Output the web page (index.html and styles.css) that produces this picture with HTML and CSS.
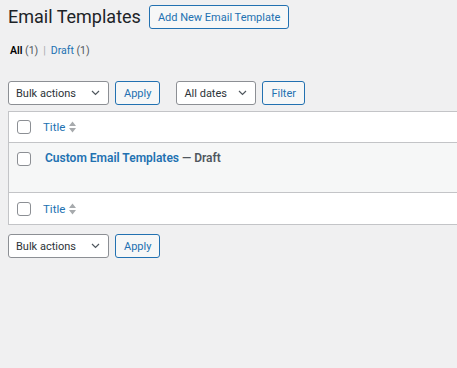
FILE: index.html
```html
<!DOCTYPE html>
<html lang="en">
<head>
  <meta charset="UTF-8" />
  <title>Email Templates</title>
  <link rel="stylesheet" href="styles.css">
</head>
<body>
  <div class="wrap">

    <!-- Heading -->
    <div class="page-head">
      <h1 class="page-title">Email Templates</h1>
      <a href="#" class="btn">Add New Email Template</a>
    </div>

    <!-- Status links -->
    <ul class="subsubsub">
      <li><a href="#" class="current">All <span class="count">(1)</span></a></li>
      <li class="sep">|</li>
      <li><a href="#">Draft <span class="count">(1)</span></a></li>
    </ul>

    <!-- Top toolbar -->
    <div class="tablenav top">
      <div class="actions">
        <select class="select bulk">
          <option>Bulk actions</option>
        </select>
        <button class="btn">Apply</button>
      </div>
      <div class="actions">
        <select class="select dates">
          <option>All dates</option>
        </select>
        <button class="btn">Filter</button>
      </div>
    </div>

    <!-- List table -->
    <table class="list-table">
      <thead>
        <tr>
          <td class="check-col"><input type="checkbox" /></td>
          <th class="title-col"><a href="#">Title <span class="sort"></span></a></th>
        </tr>
      </thead>
      <tbody>
        <tr class="alt">
          <td class="check-col"><input type="checkbox" /></td>
          <td class="title-col"><a href="#" class="row-title">Custom Email Templates</a> <span class="post-state">— Draft</span></td>
        </tr>
      </tbody>
      <tfoot>
        <tr>
          <td class="check-col"><input type="checkbox" /></td>
          <th class="title-col"><a href="#">Title <span class="sort"></span></a></th>
        </tr>
      </tfoot>
    </table>

    <!-- Bottom toolbar -->
    <div class="tablenav bottom">
      <div class="actions">
        <select class="select bulk">
          <option>Bulk actions</option>
        </select>
        <button class="btn">Apply</button>
      </div>
    </div>

  </div>
</body>
</html>
```

FILE: styles.css
```css
body, html {
  margin: 0;
  height: 100%;
  background: #f0f0f1;
  font-family: Roboto, "Noto Sans", sans-serif;
  font-size: 11px;
  color: #3c434a;
  overflow: hidden;
}

.wrap {
  padding: 5px 0 0 8px;
}

a {
  color: #2271b1;
  text-decoration: none;
}

.page-head {
  display: flex;
  align-items: center;
  gap: 8px;
}

.page-title {
  margin: 0;
  font-size: 18px;
  font-weight: 400;
  color: #1d2327;
  line-height: 24px;
}

.btn {
  display: inline-flex;
  align-items: center;
  box-sizing: border-box;
  height: 24px;
  padding: 0 8px;
  border: 1px solid #2271b1;
  border-radius: 3px;
  background: #f6f7f7;
  color: #2271b1;
  font-family: inherit;
  font-size: 11px;
  cursor: pointer;
}

.subsubsub {
  list-style: none;
  display: flex;
  gap: 5px;
  margin: 14px 0 0 2px;
  padding: 0;
  font-size: 10.5px;
  line-height: 16px;
  color: #646970;
}

.subsubsub .current {
  color: #000;
  font-weight: 600;
}

.subsubsub .count {
  color: #50575e;
  font-weight: 400;
}

.sep {
  color: #a7aaad;
}

.tablenav {
  display: flex;
  gap: 16px;
}

.tablenav.top {
  margin: 22px 0 6px;
}

.tablenav.bottom {
  margin-top: 9px;
}

.actions {
  display: flex;
  gap: 6px;
}

.select {
  box-sizing: border-box;
  height: 24px;
  padding: 0 20px 0 7px;
  border: 1px solid #8c8f94;
  border-radius: 3px;
  background: #fff url("data:image/svg+xml;utf8,<svg xmlns='http://www.w3.org/2000/svg' width='9' height='6'><path d='M1 1l3.5 3.5 3.5-3.5' fill='none' stroke='%2350575e' stroke-width='1.2'/></svg>") no-repeat right 8px center;
  appearance: none;
  color: #2c3338;
  font-family: inherit;
  font-size: 11px;
}

.select.bulk {
  width: 101px;
}

.select.dates {
  width: 80px;
}

.list-table {
  width: 520px;
  border-collapse: collapse;
  background: #fff;
  border: 1px solid #c3c4c7;
}

.list-table td,
.list-table th {
  padding: 0;
  text-align: left;
  font-weight: 400;
  vertical-align: middle;
}

.list-table thead tr {
  border-bottom: 1px solid #c3c4c7;
}

.list-table tfoot tr {
  border-top: 1px solid #c3c4c7;
}

.list-table thead tr,
.list-table tfoot tr {
  height: 31px;
}

.list-table tfoot tr {
  height: 32px;
}

.list-table .check-col {
  width: 26px;
  padding-left: 8px;
}

.list-table tbody tr {
  height: 50px;
}

.list-table tbody td {
  vertical-align: top;
}

.list-table tbody td.check-col {
  padding-top: 9px;
}

.list-table tbody td.title-col {
  padding: 8px 0 0 2px;
  font-size: 12px;
}

tr.alt {
  background: #f6f7f7;
}

input[type="checkbox"] {
  appearance: none;
  display: block;
  box-sizing: border-box;
  width: 14px;
  height: 14px;
  margin: 0;
  border: 1px solid #8c8f94;
  border-radius: 3px;
  background: #fff;
}

.title-col a {
  display: inline-flex;
  align-items: center;
  gap: 4px;
  font-size: 11.5px;
}

.sort {
  display: inline-block;
  width: 7px;
  height: 12px;
  background: url("data:image/svg+xml;utf8,<svg xmlns='http://www.w3.org/2000/svg' width='7' height='12'><path d='M3.5 0.5L7 5H0z M0 7h7l-3.5 4.5z' fill='%23a7aaad'/></svg>") no-repeat center;
}

.title-col a.row-title {
  display: inline;
  font-size: 12px;
  font-weight: 600;
}

.post-state {
  color: #50575e;
  font-weight: 600;
}
```
